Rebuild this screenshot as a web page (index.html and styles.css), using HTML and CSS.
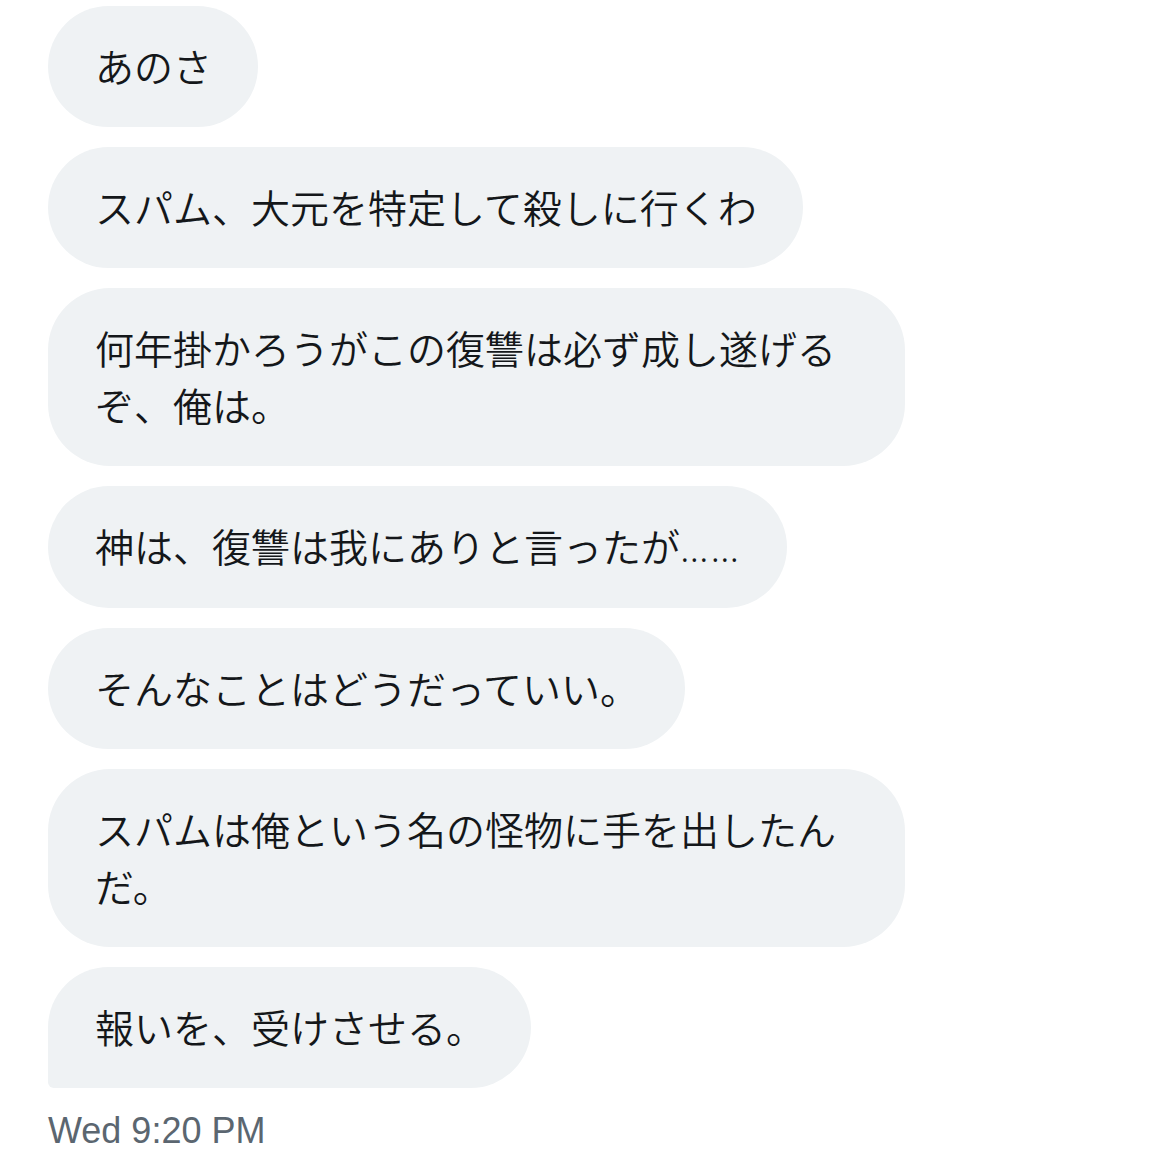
FILE: index.html
```html
<!DOCTYPE html>
<html lang="ja">

<head>
    <meta charset="UTF-8">
    <title>DM</title>
    <link rel="stylesheet" href="styles.css">
</head>

<body>
    <div class="thread">
        <div class="bubble">あのさ</div>
        <div class="bubble">スパム、大元を特定して殺しに行くわ</div>
        <div class="bubble">何年掛かろうがこの復讐は必ず成し遂げるぞ、俺は。</div>
        <div class="bubble">神は、復讐は我にありと言ったが<span class="dots">……</span></div>
        <div class="bubble">そんなことはどうだっていい。</div>
        <div class="bubble">スパムは俺という名の怪物に手を出したんだ。</div>
        <div class="bubble last">報いを、受けさせる。</div>
        <div class="time">Wed 9:20 PM</div>
    </div>
</body>

</html>
```

FILE: styles.css
```css
body {
    margin: 0;
    background: #fff;
    font-family: "Noto Sans CJK JP", "Noto Sans", sans-serif;
}

.thread {
    display: flex;
    flex-direction: column;
    align-items: flex-start;
    gap: 20px;
    padding: 6px 0 0 48px;
}

.bubble {
    background: #eff2f4;
    color: #14171a;
    font-size: 39px;
    font-weight: 350;
    line-height: 57px;
    padding: 31px 46px 33px 47px;
    border-radius: 62px;
    max-width: 764px;
}

.bubble.last {
    border-bottom-left-radius: 6px;
}

.dots {
    font-family: "Noto Sans", sans-serif;
    letter-spacing: 2px;
}

.time {
    margin-top: 2px;
    font-family: "Liberation Sans", Arial, sans-serif;
    font-size: 36px;
    line-height: 42px;
    color: #5b6670;
}
```
